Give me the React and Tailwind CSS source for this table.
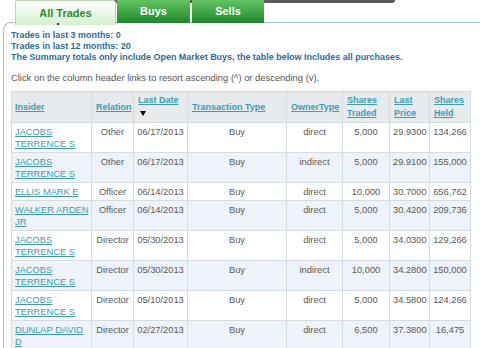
const rows = [
  ["JACOBS TERRENCE S", "Other", "06/17/2013", "Buy", "direct", "5,000", "29.9300", "134,266"],
  ["JACOBS TERRENCE S", "Other", "06/17/2013", "Buy", "indirect", "5,000", "29.9100", "155,000"],
  ["ELLIS MARK E", "Officer", "06/14/2013", "Buy", "direct", "10,000", "30.7000", "656,762"],
  ["WALKER ARDEN JR", "Officer", "06/14/2013", "Buy", "direct", "5,000", "30.4200", "209,736"],
  ["JACOBS TERRENCE S", "Director", "05/30/2013", "Buy", "direct", "5,000", "34.0300", "129,266"],
  ["JACOBS TERRENCE S", "Director", "05/30/2013", "Buy", "indirect", "10,000", "34.2800", "150,000"],
  ["JACOBS TERRENCE S", "Director", "05/10/2013", "Buy", "direct", "5,000", "34.5800", "124,266"],
  ["DUNLAP DAVID D", "Director", "02/27/2013", "Buy", "direct", "6,500", "37.3800", "16,475"],
];

const cols = ["w-[80px]", "w-[42px]", "w-[54px]", "w-[99px]", "w-[56px]", "w-[47px]", "w-[40px]", "w-[41px]"];

function HeaderLink({ children }) {
  return <a className="font-bold text-[#3b9cb2] underline">{children}</a>;
}

export default function App() {
  return (
    <div className="h-[348px] w-[480px] overflow-hidden bg-white font-['Liberation_Sans',Arial,sans-serif]">
      <div className="relative flex h-[22px] items-start gap-[1px] pl-[15px]">
        <div className="absolute left-[105px] top-0 h-[3px] w-[290px] rounded-b-[3px] bg-[#5a5a5a]" />
        <div className="relative z-10 flex h-[25px] w-[101px] items-center justify-center rounded-t-[3px] border border-b-0 border-[#b6d6b0] bg-gradient-to-b from-white to-[#d5f0cc] text-[11px] font-bold text-[#2f8a2f]">
          All Trades
          <span className="absolute bottom-[0px] left-[41px] h-[2px] w-[2px] rounded-full bg-black" />
        </div>
        <div className="relative flex h-[23px] w-[73px] items-center justify-center bg-gradient-to-b from-[#63c463] to-[#17892a] text-[11px] font-bold text-white">
          Buys
        </div>
        <div className="relative ml-[1px] flex h-[23px] w-[72px] items-center justify-center bg-gradient-to-b from-[#63c463] to-[#17892a] text-[11px] font-bold text-white">
          Sells
        </div>
      </div>

      <div className="ml-[3px] rounded-tl-[8px] border-l border-t border-[#9ec2c9] pl-[7px] pt-[7px]">
        <div className="text-[8.95px] font-bold leading-[11px] text-[#2f6b98]">
          <p>Trades in last 3 months: 0</p>
          <p>Trades in last 12 months: 20</p>
          <p>The Summary totals only include Open Market Buys, the table below Includes all purchases.</p>
        </div>
        <p className="mt-[9px] text-[9.4px] leading-[11px] text-[#555]">
          Click on the column header links to resort ascending (^) or descending (v).
        </p>

        <table className="mt-[8px] w-[459px] table-fixed border-collapse border border-[#d3dbe3] text-[9.3px] leading-[12px] text-[#585858]">
          <colgroup>
            {cols.map((c, i) => (
              <col key={i} className={c} />
            ))}
          </colgroup>
          <thead>
            <tr className="h-[31px] bg-[#e8ebee] text-left text-[9px] leading-[13px]">
              <th className="border border-[#d3dbe3] px-[3px] align-middle font-normal"><HeaderLink>Insider</HeaderLink></th>
              <th className="border border-[#d3dbe3] px-[4px] align-middle font-normal"><HeaderLink>Relation</HeaderLink></th>
              <th className="border border-[#d3dbe3] px-[4px] pt-[2px] align-top font-normal">
                <HeaderLink>Last Date</HeaderLink>
                <div className="ml-[2px] mt-[4px] h-0 w-0 border-x-[3.5px] border-t-[5px] border-x-transparent border-t-black" />
              </th>
              <th className="border border-[#d3dbe3] px-[4px] align-middle font-normal"><HeaderLink>Transaction Type</HeaderLink></th>
              <th className="border border-[#d3dbe3] px-[4px] align-middle font-normal"><HeaderLink>OwnerType</HeaderLink></th>
              <th className="border border-[#d3dbe3] px-[4px] align-middle font-normal"><HeaderLink>Shares Traded</HeaderLink></th>
              <th className="border border-[#d3dbe3] px-[4px] align-middle font-normal"><HeaderLink>Last Price</HeaderLink></th>
              <th className="border border-[#d3dbe3] px-[4px] align-middle font-normal"><HeaderLink>Shares Held</HeaderLink></th>
            </tr>
          </thead>
          <tbody>
            {rows.map((r, i) => (
              <tr key={i} className={i % 2 ? "bg-[#edf3f9]" : "bg-white"}>
                {r.map((cell, j) => (
                  <td
                    key={j}
                    className={`border border-[#d3dbe3] pb-[2px] pt-[3px] align-top ${j === 0 ? "pl-[3px] pr-0 text-left" : "px-[3px] text-center"}`}
                  >
                    {j === 0 ? <a className="text-[#3b9cb2] underline">{cell}</a> : cell}
                  </td>
                ))}
              </tr>
            ))}
          </tbody>
        </table>
      </div>
    </div>
  );
}
